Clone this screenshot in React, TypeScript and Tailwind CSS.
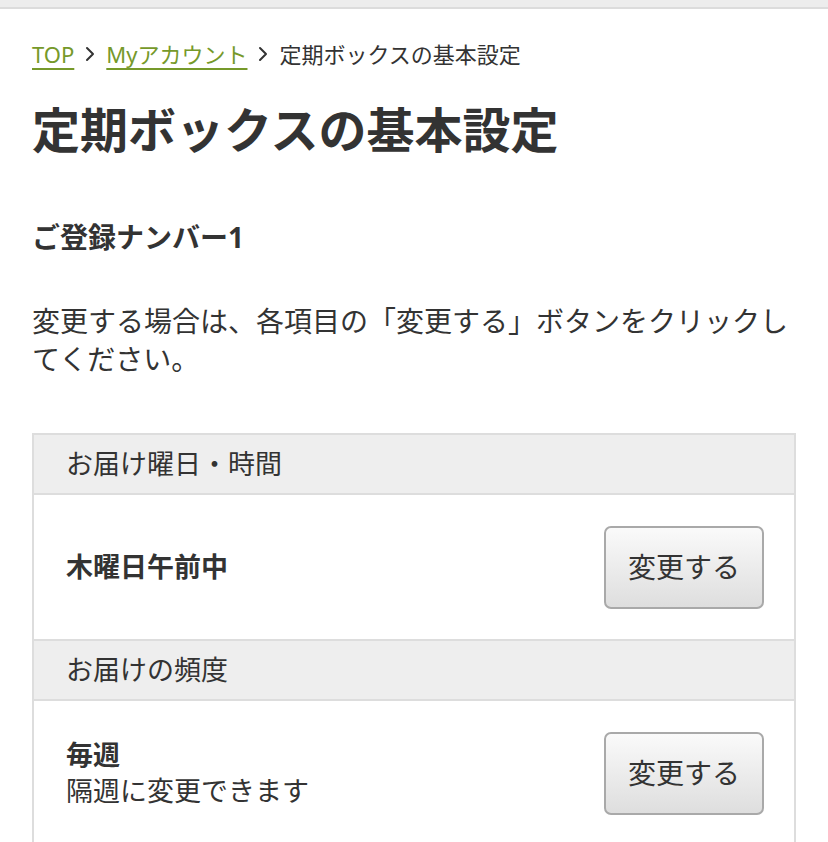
const FONT = {
  fontFamily: '"Noto Sans", "Noto Sans CJK JP", sans-serif',
};

function Chevron() {
  return (
    <svg
      className="mx-[11px] h-[16px] w-[10px] shrink-0"
      fill="none"
      stroke="#333"
      strokeLinecap="round"
      strokeLinejoin="round"
      strokeWidth="2"
      viewBox="0 0 10 16"
    >
      <polyline points="2,2 8,8 2,14" />
    </svg>
  );
}

function ChangeButton() {
  return (
    <button
      className="h-[83px] w-[160px] shrink-0 rounded-[7px] border-2 border-[#a9a9a9] bg-gradient-to-b from-[#fafafa] to-[#dedede] text-[28px] text-[#333]"
      type="button"
    >
      変更する
    </button>
  );
}

interface Item {
  label: string;
  value: string;
  note?: string;
}

const items: Item[] = [
  { label: "お届け曜日・時間", value: "木曜日午前中" },
  { label: "お届けの頻度", value: "毎週", note: "隔週に変更できます" },
];

export default function App() {
  return (
    <div className="min-h-[842px] bg-white text-[#333]" style={FONT}>
      <div className="h-[9px] border-b-2 border-[#dcdcdc] bg-[#ededed]" />
      <div className="px-[32px]">
        <nav className="mt-[30px] flex items-center text-[22px] leading-[30px]">
          <a className="text-[#76992a] underline underline-offset-[5px]" href="#">
            TOP
          </a>
          <Chevron />
          <a className="text-[#76992a] underline underline-offset-[5px]" href="#">
            Myアカウント
          </a>
          <Chevron />
          <span>定期ボックスの基本設定</span>
        </nav>
        <h1 className="mt-[31px] text-[48px] font-bold leading-[60px]">
          定期ボックスの基本設定
        </h1>
        <p className="mt-[59px] text-[28px] font-bold leading-[36px]">
          ご登録ナンバー1
        </p>
        <p className="mt-[47px] text-[28px] leading-[38px]">
          変更する場合は、各項目の「変更する」ボタンをクリックしてください。
        </p>
        <div className="mt-[55px] border-x-2 border-t-2 border-[#dddddd]">
          {items.map((item) => (
            <div key={item.label}>
              <div className="flex h-[60px] items-center border-b-2 border-[#dddddd] bg-[#eeeeee] px-[32px] text-[27px]">
                {item.label}
              </div>
              <div className="flex h-[146px] items-center justify-between border-b-2 border-[#dddddd] pl-[32px] pr-[30px]">
                <div className="text-[27px] leading-[36px]">
                  <p className="font-bold">{item.value}</p>
                  {item.note && <p>{item.note}</p>}
                </div>
                <ChangeButton />
              </div>
            </div>
          ))}
        </div>
      </div>
    </div>
  );
}
